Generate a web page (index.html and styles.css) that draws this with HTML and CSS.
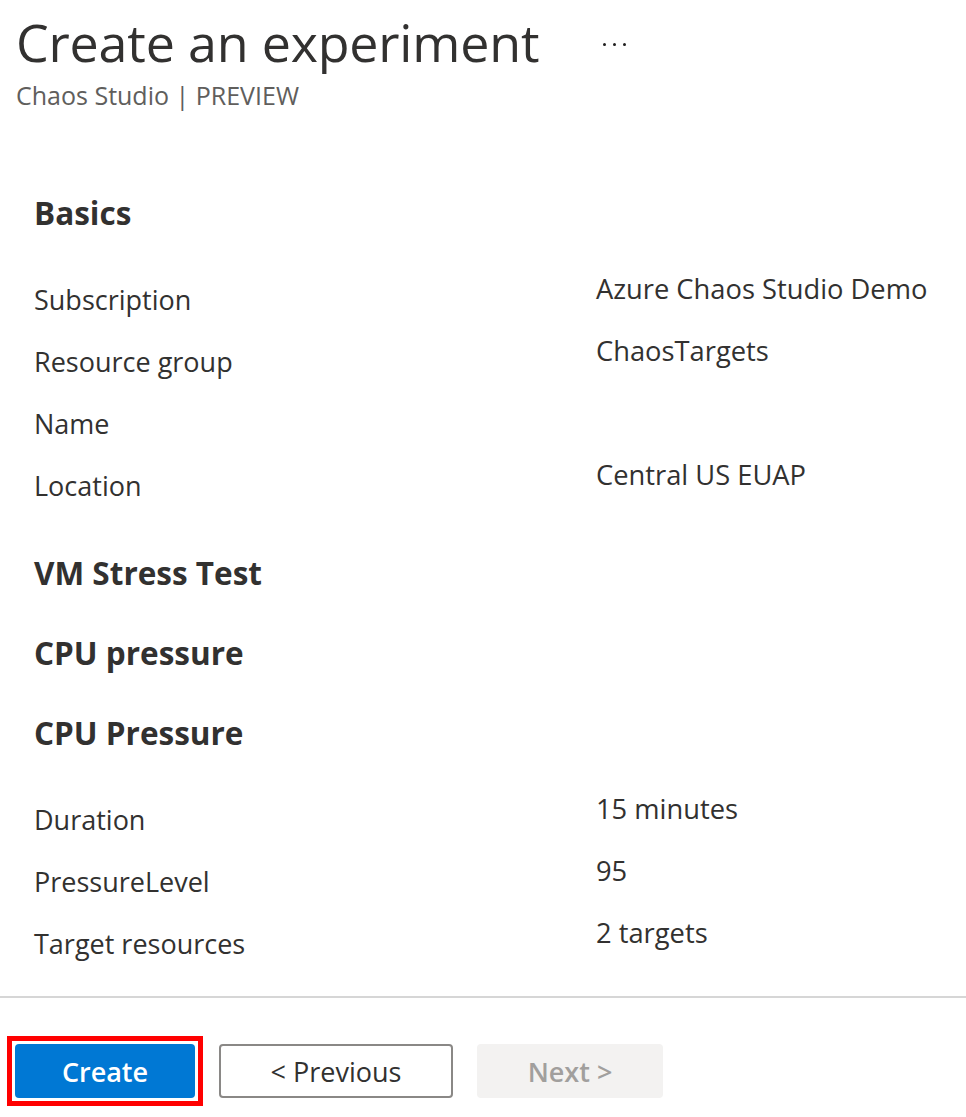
FILE: index.html
```html
<!DOCTYPE html>
<html lang="en">
<head>
<meta charset="utf-8">
<title>Create an experiment</title>
<link rel="stylesheet" href="styles.css">
</head>
<body>
<div class="blade">
  <header class="blade-header">
    <div class="title-row">
      <h1 class="title">Create an experiment</h1>
      <button class="more" aria-label="More"><span class="dot"></span><span class="dot"></span><span class="dot"></span></button>
    </div>
    <div class="subtitle">Chaos Studio | PREVIEW</div>
  </header>

  <main class="content">
    <h2 class="section-title first">Basics</h2>
    <div class="summary">
      <div class="row"><div class="label">Subscription</div><div class="value">Azure Chaos Studio Demo</div></div>
      <div class="row"><div class="label">Resource group</div><div class="value">ChaosTargets</div></div>
      <div class="row"><div class="label">Name</div><div class="value"></div></div>
      <div class="row"><div class="label">Location</div><div class="value">Central US EUAP</div></div>
    </div>

    <h2 class="section-title">VM Stress Test</h2>
    <h2 class="section-title">CPU pressure</h2>
    <h2 class="section-title">CPU Pressure</h2>
    <div class="summary last">
      <div class="row"><div class="label">Duration</div><div class="value">15 minutes</div></div>
      <div class="row"><div class="label">PressureLevel</div><div class="value">95</div></div>
      <div class="row"><div class="label">Target resources</div><div class="value">2 targets</div></div>
    </div>
  </main>

  <footer class="footer">
    <div class="highlight">
      <button class="btn btn-primary">Create</button>
    </div>
    <button class="btn btn-secondary">&lt; Previous</button>
    <button class="btn btn-disabled" disabled>Next &gt;</button>
  </footer>
</div>
</body>
</html>
```

FILE: styles.css
```css
html, body {
  margin: 0;
  padding: 0;
  background: #ffffff;
}

body {
  font-family: "Open Sans", "Noto Sans", "Liberation Sans", sans-serif;
  color: #323130;
}

.blade {
  width: 966px;
}

.blade-header {
  padding: 10px 16px 0 16px;
}

.title-row {
  display: flex;
  align-items: center;
  gap: 64px;
}

.title {
  margin: 0;
  font-size: 52px;
  line-height: 64px;
  font-weight: 400;
  color: #323130;
  letter-spacing: -0.2px;
}

.more {
  display: flex;
  gap: 7px;
  padding: 0;
  margin: 0 0 -4px 0;
  border: none;
  background: transparent;
}

.dot {
  width: 3px;
  height: 3px;
  border-radius: 50%;
  background: #201f1e;
}

.subtitle {
  margin-top: 4px;
  font-size: 25px;
  line-height: 34px;
  color: #605e5c;
}

.content {
  padding: 0 34px;
}

.section-title {
  margin: 36px 0 0 0;
  font-size: 31.5px;
  line-height: 44px;
  font-weight: 700;
  color: #323130;
}

.section-title.first {
  margin-top: 79px;
}

.summary {
  margin-top: 34px;
  margin-bottom: 34px;
}

.summary.last {
  margin-bottom: 0;
}

.row {
  display: grid;
  grid-template-columns: 562px 1fr;
  height: 62px;
}

.label {
  padding-top: 11px;
  font-size: 27px;
  line-height: 40px;
  color: #323130;
}

.value {
  font-size: 27.3px;
  line-height: 40px;
  color: #323130;
}

.summary + .section-title {
  margin-top: 0;
}

.footer {
  margin-top: 21px;
  border-top: 2px solid #d6d6d6;
  padding: 38px 0 0 7px;
  display: flex;
  align-items: center;
  gap: 16px;
}

.highlight {
  border: 5px solid #ff0000;
  padding: 3px;
  display: flex;
}

.btn {
  font-family: "Open Sans", "Noto Sans", "Liberation Sans", sans-serif;
  font-size: 27px;
  font-weight: 600;
  height: 54px;
  border-radius: 4px;
  padding: 0;
  margin: 0;
  box-sizing: border-box;
}

.btn-primary {
  width: 180px;
  background: #0078d4;
  color: #ffffff;
  border: none;
}

.btn-secondary {
  width: 234px;
  background: #ffffff;
  color: #323130;
  border: 2px solid #8a8886;
  font-weight: 500;
}

.btn-disabled {
  width: 186px;
  background: #f3f2f1;
  color: #a19f9d;
  border: none;
  margin-left: 8px;
}
```
